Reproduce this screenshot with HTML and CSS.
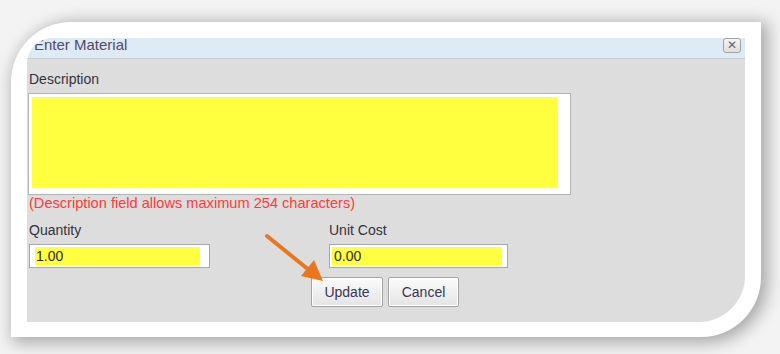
FILE: index.html
```html
<!DOCTYPE html>
<html lang="en">
<head>
    <meta charset="UTF-8">
    <title>Enter Material</title>
    <link rel="stylesheet" href="styles.css">
</head>
<body>
    <div class="page">
        <div class="frame">
            <div class="dialog">
                <div class="dialog-title">
                    <span class="title-text">Enter Material</span>
                    <button class="close-btn">&#x2715;</button>
                </div>
                <div class="dialog-body">
                    <label class="field-label">Description</label>
                    <div class="textarea"><div class="textarea-fill"></div></div>
                    <div class="hint">(Description field allows maximum 254 characters)</div>

                    <div class="field-row">
                        <div class="field">
                            <label class="field-label">Quantity</label>
                            <div class="input qty"><span class="input-fill">1.00</span></div>
                        </div>
                        <div class="field">
                            <label class="field-label">Unit Cost</label>
                            <div class="input cost"><span class="input-fill">0.00</span></div>
                        </div>
                    </div>

                    <div class="actions">
                        <button class="btn btn-update">Update</button>
                        <button class="btn btn-cancel">Cancel</button>
                    </div>
                </div>
            </div>
        </div>

        <!-- annotation arrow pointing at Update -->
        <svg class="arrow" width="780" height="354" viewBox="0 0 780 354">
            <line x1="267" y1="236" x2="309" y2="270" stroke="#e8771f" stroke-width="4" stroke-linecap="round"/>
            <polygon points="323,281 301,276 314,260" fill="#e8771f"/>
        </svg>
    </div>
</body>
</html>
```

FILE: styles.css
```css
body {
    margin: 0;
    background: #f3f3f3;
    font-family: "Liberation Sans", Arial, sans-serif;
}

.page {
    position: relative;
    width: 780px;
    height: 354px;
    overflow: hidden;
    padding: 22px 0 0 11px;
    box-sizing: border-box;
}

.frame {
    width: 750px;
    height: 315px;
    box-sizing: border-box;
    padding: 16px 16px 15px 16px;
    background: #ffffff;
    border-radius: 60px 0 60px 0;
    box-shadow: 4px 3px 16px 3px rgba(0, 0, 0, 0.3);
}

.dialog {
    height: 100%;
    background: #dddddd;
    border-radius: 26px 0 46px 0;
    overflow: hidden;
}

.dialog-title {
    display: flex;
    justify-content: space-between;
    align-items: flex-start;
    height: 20px;
    background: #deebf5;
    border-bottom: 1px solid #c8cdd2;
    padding: 0 4px 0 7px;
}

.title-text {
    font-size: 15px;
    line-height: 14px;
    color: #54496c;
}

.close-btn {
    width: 18px;
    height: 15px;
    margin: 0;
    padding: 0;
    border: 1px solid #a2a2a2;
    border-radius: 3px;
    background: linear-gradient(#f4f4f4, #dedede);
    color: #666666;
    font-family: "DejaVu Sans", sans-serif;
    font-size: 12px;
    font-weight: bold;
    line-height: 13px;
}

.dialog-body {
    padding: 12px 0 0 1px;
}

.field-label {
    display: block;
    padding-left: 1px;
    font-size: 14px;
    line-height: 16px;
    color: #34323f;
}

.textarea {
    width: 543px;
    height: 102px;
    box-sizing: border-box;
    margin-top: 6px;
    padding: 3px 12px 6px 3px;
    background: #ffffff;
    border: 1px solid #b4b4b4;
}

.textarea-fill {
    height: 100%;
    background: #ffff40;
}

.hint {
    font-size: 14.6px;
    line-height: 16px;
    color: #ff3a3a;
    padding-left: 1px;
}

.field-row {
    display: grid;
    grid-template-columns: 300px 1fr;
    margin-top: 11px;
}

.input {
    box-sizing: border-box;
    height: 24px;
    margin-top: 6px;
    margin-left: 1px;
    padding-top: 2px;
    padding-bottom: 2px;
    background: #ffffff;
    border: 1px solid #a8a8a8;
}

.input.qty {
    width: 181px;
    padding-left: 5px;
    padding-right: 9px;
}

.input.cost {
    width: 179px;
    padding-left: 2px;
    padding-right: 5px;
}

.input-fill {
    display: block;
    height: 18px;
    padding: 1px 0 0 1px;
    box-sizing: border-box;
    background: #ffff40;
    font-size: 14px;
    line-height: 16px;
    color: #2a2a2a;
}

.cost .input-fill {
    padding-left: 2px;
}

.actions {
    display: flex;
    justify-content: center;
    gap: 5px;
    margin-top: 9px;
    padding-right: 3px;
}

.btn {
    height: 30px;
    margin: 0;
    padding: 0;
    border: 1px solid #a3a3a3;
    border-radius: 2px;
    background: linear-gradient(#fbfbfb, #e4e4e4);
    box-shadow: inset 0 0 0 1px #ffffff;
    font-family: "Liberation Sans", Arial, sans-serif;
    font-size: 14px;
    line-height: 16px;
    color: #3b3552;
}

.btn-update {
    width: 72px;
}

.btn-cancel {
    width: 71px;
}

.arrow {
    position: absolute;
    left: 0;
    top: 0;
    pointer-events: none;
}
```
